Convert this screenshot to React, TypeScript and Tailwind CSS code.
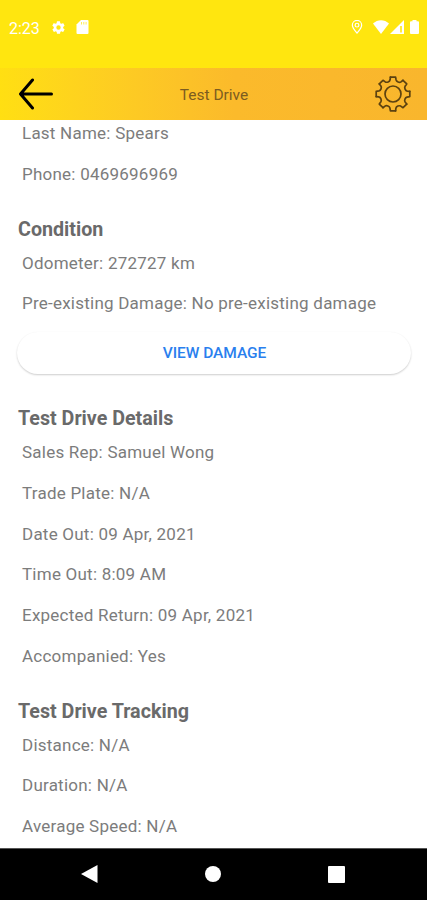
import React from 'react';

interface Section {
  title?: string;
  rows: [string, string][];
  action?: string;
}

const sections: Section[] = [
  {
    rows: [
      ['Last Name', 'Spears'],
      ['Phone', '0469696969'],
    ],
  },
  {
    title: 'Condition',
    rows: [
      ['Odometer', '272727 km'],
      ['Pre-existing Damage', 'No pre-existing damage'],
    ],
    action: 'VIEW DAMAGE',
  },
  {
    title: 'Test Drive Details',
    rows: [
      ['Sales Rep', 'Samuel Wong'],
      ['Trade Plate', 'N/A'],
      ['Date Out', '09 Apr, 2021'],
      ['Time Out', '8:09 AM'],
      ['Expected Return', '09 Apr, 2021'],
      ['Accompanied', 'Yes'],
    ],
  },
  {
    title: 'Test Drive Tracking',
    rows: [
      ['Distance', 'N/A'],
      ['Duration', 'N/A'],
      ['Average Speed', 'N/A'],
    ],
  },
];

const teeth = [0, 45, 90, 135, 180, 225, 270, 315];

const GearOutline: React.FC = () => (
  <svg viewBox="-19 -19 38 38" className="w-[38px] h-[38px]" fill="none" stroke="#5c4210" strokeWidth="1.7">
    {teeth.map((angle) => (
      <path
        key={angle}
        transform={`rotate(${angle})`}
        d="M-2.6 -16.8H2.6L3.1 -14C3.6 -12.2 6.3 -11 8 -12.1L10.04 -13.72"
        strokeLinecap="round"
        strokeLinejoin="round"
      />
    ))}
    <circle r="8" />
  </svg>
);

const StatusBar: React.FC = () => (
  <div className="flex h-[68px] items-start justify-between bg-[#ffe60f] pt-[18px] pl-[9px] pr-[7px] text-white">
    <div className="flex h-[19px] items-center">
      <span className="w-[42px] pt-px text-[16px] leading-[19px]">2:23</span>
      <svg viewBox="0 0 24 24" className="-mt-px w-[15px] h-[15px]" fill="currentColor">
        <path d="M19.4 13a7.8 7.8 0 0 0 0-2l2.1-1.7a.5.5 0 0 0 .1-.6l-2-3.5a.5.5 0 0 0-.6-.2l-2.5 1a7.3 7.3 0 0 0-1.7-1l-.4-2.6a.5.5 0 0 0-.5-.4h-4a.5.5 0 0 0-.5.4L9 5a7.7 7.7 0 0 0-1.7 1l-2.5-1a.5.5 0 0 0-.6.2l-2 3.5a.5.5 0 0 0 .1.6L4.5 11a7.8 7.8 0 0 0 0 2l-2.1 1.7a.5.5 0 0 0-.1.6l2 3.5a.5.5 0 0 0 .6.2l2.5-1a7.3 7.3 0 0 0 1.7 1l.4 2.6a.5.5 0 0 0 .5.4h4a.5.5 0 0 0 .5-.4l.4-2.6a7.7 7.7 0 0 0 1.7-1l2.5 1a.5.5 0 0 0 .6-.2l2-3.5a.5.5 0 0 0-.1-.6zM12 15.5a3.5 3.5 0 1 1 0-7 3.5 3.5 0 0 1 0 7z" />
      </svg>
      <svg viewBox="0 0 12 14" className="-mt-px ml-[10px] w-[13px] h-[14px]" fill="currentColor">
        <path d="M4.5 0H11a1 1 0 0 1 1 1V13a1 1 0 0 1-1 1H1a1 1 0 0 1-1-1V4.5z" />
        <path d="M5 2V4.5M7.3 2V4.5M9.6 2V4.5" stroke="#ffe60f" strokeWidth="0.7" />
      </svg>
    </div>
    <div className="flex h-[18px] items-center">
      <svg viewBox="0 0 12 15" className="w-[12px] h-[14px]" fill="none" stroke="currentColor" strokeWidth="1.3">
        <path d="M6 14C3 10.5 1 8 1 5.5a5 5 0 0 1 10 0C11 8 9 10.5 6 14z" />
        <circle cx="6" cy="5.5" r="2" />
      </svg>
      <svg viewBox="0 0 16 14" className="ml-[10px] w-4 h-[14px]" fill="currentColor">
        <path d="M8 14L0 3.5C4.5-1 11.5-1 16 3.5z" />
      </svg>
      <svg viewBox="0 0 14 14" className="ml-px w-[14px] h-[14px]" fill="currentColor">
        <path d="M0 14L14 0V14z" />
        <path d="M11 6V12.5" stroke="#ffe60f" strokeWidth="1.6" />
      </svg>
      <svg viewBox="0 0 9 14" className="ml-[6px] mr-px w-[9px] h-[14px]" fill="currentColor">
        <path d="M2.5 0h4v1.2H8a1 1 0 0 1 1 1V13a1 1 0 0 1-1 1H1a1 1 0 0 1-1-1V2.2a1 1 0 0 1 1-1h1.5z" />
      </svg>
    </div>
  </div>
);

const Header: React.FC = () => (
  <header className="grid h-[52px] grid-cols-[1fr_auto_1fr] items-center bg-linear-to-r from-[#ffdf12] from-0% via-[#fbba2b] via-55% to-[#f9b62d] pl-[18px] pr-[15px]">
    <svg viewBox="0 0 36 32" className="w-9 h-8" fill="none" stroke="#000" strokeWidth="3" strokeLinecap="round" strokeLinejoin="round">
      <path d="M33.5 16H3M14.5 2L2.5 16L14.5 30" />
    </svg>
    <h1 className="pt-[3px] pr-[2px] text-[15.5px] text-[#7c5c20]">Test Drive</h1>
    <div className="justify-self-end">
      <GearOutline />
    </div>
  </header>
);

const NavBar: React.FC = () => (
  <nav className="flex h-[52px] shrink-0 items-center justify-between border-t border-[#555] bg-black pb-px pl-[81px] pr-[82px]">
    <svg viewBox="0 0 17 18" className="w-[17px] h-[18px]" fill="#fff">
      <path d="M0 9L16.5 0V18z" />
    </svg>
    <div className="w-4 h-4 rounded-full bg-white" />
    <div className="w-[17px] h-[17px] rounded-[1px] bg-white" />
  </nav>
);

export default function App() {
  return (
    <div className="flex h-[900px] w-[427px] flex-col overflow-hidden bg-white font-['Roboto',sans-serif]">
      <StatusBar />
      <Header />
      <main className="min-h-0 flex-1 overflow-hidden">
        <div className="-mt-[7px]">
          {sections.map((section, i) => (
            <section key={i} className="mb-[22.4px]">
              {section.title && (
                <h2 className="pl-[18px] text-[19.7px] font-bold leading-[26px] text-[#6a6a6a]">{section.title}</h2>
              )}
              {section.rows.map(([label, value]) => (
                <p key={label} className="h-[40.7px] pl-[22px] text-[17px] leading-[40.7px] tracking-[0.23px] text-[#7c7c7c]">
                  {label}: {value}
                </p>
              ))}
              {section.action && (
                <button className="mx-[17px] mt-[8px] mb-[32px] block h-[42px] w-[394px] rounded-full bg-white pl-px text-[15.5px] font-medium tracking-[-0.05px] text-[#2a7fee] shadow-[0_1px_2px_rgba(0,0,0,0.2)]">
                  {section.action}
                </button>
              )}
            </section>
          ))}
        </div>
      </main>
      <NavBar />
    </div>
  );
}
